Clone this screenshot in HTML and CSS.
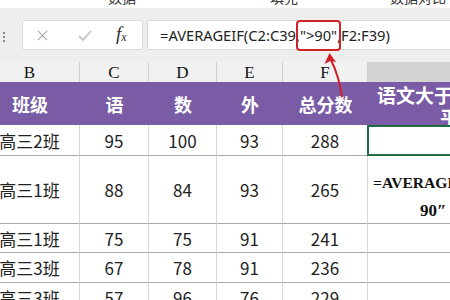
FILE: index.html
```html
<!DOCTYPE html>
<html lang="zh">
<head>
<meta charset="utf-8">
<link rel="stylesheet" href="styles.css">
</head>
<body>
<div class="page">
  <div class="ribbon">
    <span class="rb rb1">数据</span>
    <span class="rb rb2">填充</span>
    <span class="rb rb3">数据对比</span>
  </div>
  <div class="toolbar">
    <div class="grip"><i></i><i></i><i></i></div>
    <div class="fbox-left">
      <svg class="ic ic-x" viewBox="0 0 12 12"><path d="M1 1 L11 11 M11 1 L1 11"/></svg>
      <svg class="ic ic-ok" viewBox="0 0 14 12"><path d="M1 6 L5 10 L13 1"/></svg>
      <span class="fx">f<sub>x</sub></span>
    </div>
    <div class="fbox-input">=AVERAGEIF(C2:C39,<span class="hl">"&gt;90"</span>,F2:F39)</div>
  </div>
  <div class="colheads">
    <div class="ch">B</div>
    <div class="ch">C</div>
    <div class="ch">D</div>
    <div class="ch">E</div>
    <div class="ch">F</div>
    <div class="ch ch-sel"></div>
  </div>
  <div class="sheet">
    <div class="h">班级</div>
    <div class="h">语</div>
    <div class="h">数</div>
    <div class="h">外</div>
    <div class="h">总分数</div>
    <div class="h hg"><span class="l1">语文大于90分</span><span class="l2">平均总分</span></div>

    <div class="c">高三2班</div>
    <div class="c">95</div>
    <div class="c">100</div>
    <div class="c">93</div>
    <div class="c">288</div>
    <div class="c sel"></div>

    <div class="c">高三1班</div>
    <div class="c">88</div>
    <div class="c">84</div>
    <div class="c">93</div>
    <div class="c">265</div>
    <div class="c fcell"><span class="f1">=AVERAGEIF(C2:C39,"&gt;</span><span class="f2">90″</span></div>

    <div class="c">高三1班</div>
    <div class="c">75</div>
    <div class="c">75</div>
    <div class="c">91</div>
    <div class="c">241</div>
    <div class="c"></div>

    <div class="c">高三3班</div>
    <div class="c">67</div>
    <div class="c">78</div>
    <div class="c">91</div>
    <div class="c">236</div>
    <div class="c"></div>

    <div class="c">高三3班</div>
    <div class="c">57</div>
    <div class="c">96</div>
    <div class="c">76</div>
    <div class="c">229</div>
    <div class="c"></div>
  </div>
  <svg class="arrow" viewBox="0 0 450 300">
    <path class="shaft" d="M342 97 Q339 76 331 60"/>
    <polygon class="head" points="329.5,53 324.5,64 330.5,61 336,62"/>
  </svg>
</div>
</body>
</html>
```

FILE: styles.css
```css
* { box-sizing: border-box; }
html, body { margin: 0; padding: 0; }
body { background: #fff; font-family: "Noto Sans", "Noto Sans CJK SC", sans-serif; }

.page {
  position: relative;
  width: 450px;
  height: 300px;
  overflow: hidden;
  background: #fff;
}

/* clipped ribbon text at the very top */
.ribbon {
  height: 8px;
  overflow: hidden;
  display: flex;
  background: #fff;
  font-family: "Noto Sans CJK SC", sans-serif;
  font-size: 14px;
  line-height: 14px;
  color: #333;
  white-space: nowrap;
}
.rb { display: block; margin-top: -10px; }
.rb1 { margin-left: 108px; }
.rb2 { margin-left: 134px; }
.rb3 { margin-left: 92px; }

/* formula bar area */
.toolbar {
  height: 54px;
  background: #eeeeee;
  display: flex;
  align-items: flex-start;
  padding-top: 12px;
}
.grip {
  width: 22px;
  height: 30px;
  display: flex;
  flex-direction: column;
  gap: 2px;
  padding: 12px 0 0 3px;
}
.grip i { display: block; width: 2px; height: 2px; background: #8a8a8a; }

.fbox-left {
  width: 121px;
  height: 30px;
  background: #fff;
  border: 1px solid #d9d9d9;
  border-radius: 2px;
  position: relative;
}
.ic { position: absolute; fill: none; stroke-width: 1.2; }
.ic-x { left: 14px; top: 9px; width: 11px; height: 11px; stroke: #a8a8a8; }
.ic-ok { left: 55px; top: 9px; width: 14px; height: 12px; stroke: #c2c2c2; stroke-width: 1.8; }
.fx {
  position: absolute;
  left: 93px;
  top: 2px;
  font-family: "Liberation Serif", serif;
  font-style: italic;
  font-size: 19px;
  color: #2e2e2e;
}
.fx sub { font-size: 12px; vertical-align: -1px; }

.fbox-input {
  margin-left: 4px;
  flex: 1 0 auto;
  height: 30px;
  background: #fff;
  border: 1px solid #d9d9d9;
  border-right: none;
  padding-left: 12px;
  font-size: 14.7px;
  line-height: 28px;
  color: #222;
  white-space: nowrap;
}
.hl { position: relative; }
.hl::after {
  content: "";
  position: absolute;
  left: -4px;
  right: -4px;
  top: -5px;
  bottom: -6px;
  border: 2px solid #d0222b;
  border-radius: 4px;
}

/* column letters */
.colheads {
  display: grid;
  grid-template-columns: 100px 69px 68px 66px 85px 130px;
  margin-left: -20px;
  height: 20px;
  background: #f1f1f1;
}
.ch {
  font-family: "Liberation Serif", serif;
  font-size: 17px;
  line-height: 22px;
  color: #111;
  text-align: center;
  border-right: 1px solid #cfcfcf;
}
.ch-sel {
  background: #d4d4d4;
  border-bottom: 2px solid #1f6e43;
  border-right: none;
}

/* sheet body */
.sheet {
  display: grid;
  grid-template-columns: 100px 69px 68px 66px 85px 130px;
  grid-template-rows: 43px 31px 68px 29px 30px 30px;
  margin-left: -20px;
  font-family: "Noto Sans CJK SC", sans-serif;
}
.h {
  background: #7a5ca6;
  color: #fff;
  font-weight: 700;
  font-size: 18px;
  display: flex;
  align-items: center;
  justify-content: center;
}
.hg {
  display: block;
  overflow: hidden;
  padding-top: 2px;
  line-height: 22px;
  white-space: nowrap;
  font-size: 19px;
}
.hg span { display: block; }
.hg .l1 { padding-left: 9px; }
.hg .l2 { padding-left: 72px; }

.c {
  display: flex;
  align-items: center;
  justify-content: center;
  font-size: 17px;
  color: #222;
  border-right: 1px solid #d8d8d8;
  border-bottom: 1px solid #a9a9a9;
  white-space: nowrap;
  overflow: hidden;
}
.sel {
  border: 2px solid #1f6e43;
  border-right: none;
  margin-left: -1px;
}
.fcell {
  display: block;
  padding-top: 13px;
  font-family: "Liberation Serif", serif;
  font-weight: 700;
  font-size: 15.6px;
  line-height: 28px;
  color: #111;
  border-right: none;
}
.fcell span { display: block; }
.f1 { padding-left: 5px; }
.f2 { padding-left: 52px; font-size: 17px; }

/* red annotation arrow */
.arrow {
  position: absolute;
  left: 0;
  top: 0;
  width: 450px;
  height: 300px;
  pointer-events: none;
}
.shaft { fill: none; stroke: #cf2029; stroke-width: 2; }
.head { fill: #cf2029; }
```
